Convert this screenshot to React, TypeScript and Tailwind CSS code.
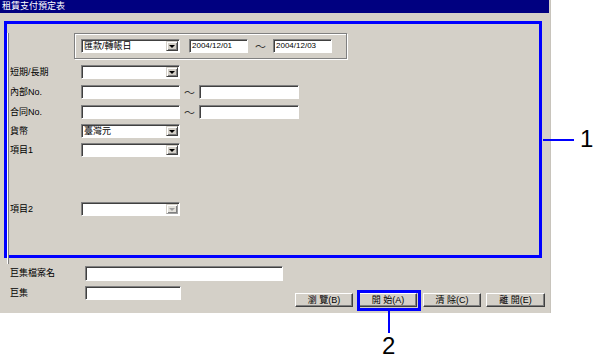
import React from 'react';

const sunken =
  'border border-t-[#808080] border-l-[#808080] border-r-white border-b-white shadow-[inset_1px_1px_0_#404040] bg-white';

const Combo: React.FC<{ className: string; text?: string; disabled?: boolean }> = ({ className, text, disabled }) => (
  <div className={`${sunken} ${className} flex h-[14px] items-stretch py-[1px] pr-[1px]`}>
    <span className="pl-[2px] text-[9px] leading-[11px]">{text}</span>
    <div
      className={`ml-auto flex w-[12px] items-center justify-center border border-t-[#d4d0c8] border-l-[#d4d0c8] shadow-[inset_1px_1px_0_#fff,inset_-1px_-1px_0_#808080] ${
        disabled ? 'bg-[#e4e2dc] border-r-[#a0a0a0] border-b-[#a0a0a0]' : 'bg-[#d4d0c8] border-r-[#404040] border-b-[#404040]'
      }`}
    >
      <span
        className={`h-0 w-0 border-x-[3px] border-t-[3px] border-x-transparent ${
          disabled ? 'border-t-[#a0a0a0]' : 'border-t-black'
        }`}
      />
    </div>
  </div>
);

const Input: React.FC<{ className: string; text?: string }> = ({ className, text }) => (
  <div className={`${sunken} ${className} flex h-[14px] items-center pl-[2px] text-[8px]`}>{text}</div>
);

const Btn: React.FC<{ label: string; className?: string; children?: React.ReactNode }> = ({ label, className = '', children }) => (
  <div
    className={`relative flex h-[14px] w-[58px] items-center justify-center border border-t-white border-l-white border-r-[#404040] border-b-[#404040] bg-[#d4d0c8] text-[9px] leading-none shadow-[inset_-1px_-1px_0_#808080] ${className}`}
  >
    {label}
    {children}
  </div>
);

const Row: React.FC<{ label: string; className: string; children: React.ReactNode }> = ({ label, className, children }) => (
  <div className={`flex items-center ${className}`}>
    <div className="w-[73px] pl-[2px] text-[9px] leading-none">{label}</div>
    {children}
  </div>
);

const Tilde: React.FC<{ className: string }> = ({ className }) => (
  <div className={`${className} text-center font-['Noto_Sans_CJK_TC',sans-serif] text-[11px] leading-none text-[#333]`}>～</div>
);

const App: React.FC = () => {
  return (
    <div className="relative h-[362px] w-[594px] overflow-hidden bg-white font-['Liberation_Sans','Noto_Sans_CJK_TC',sans-serif] text-black">
      <div className="flex h-[313px] w-[551px] flex-col bg-[#d4d0c8] border-r border-r-[#c8c4bc]">
        {/* title bar */}
        <div className="h-[13px] w-[549px] bg-[#000080] pl-[2px] text-[9px] leading-[13px] text-white">租賃支付預定表</div>

        {/* highlighted search area (1) */}
        <div className="ml-[4px] mt-[8px] h-[237px] w-[538px] border-[3px] border-[#0000ff]">
          <div className="h-full border-l border-l-white shadow-[inset_1px_0_0_#808080]">
            <div className="ml-[66px] mt-[9px] flex h-[26px] w-[273px] items-center border border-[#808080] pl-[6px] shadow-[inset_1px_1px_0_#fff,1px_1px_0_#fff]">
              <Combo className="w-[99px]" text="匯款/轉帳日" />
              <Input className="ml-[9px] w-[59px]" text="2004/12/01" />
              <Tilde className="w-[25px]" />
              <Input className="w-[59px]" text="2004/12/03" />
            </div>

            <Row label="短期/長期" className="mt-[6px]">
              <Combo className="w-[99px]" />
            </Row>
            <Row label="內部No." className="mt-[6px]">
              <Input className="w-[99px]" />
              <Tilde className="w-[19px]" />
              <Input className="w-[100px]" />
            </Row>
            <Row label="合同No." className="mt-[6px]">
              <Input className="w-[99px]" />
              <Tilde className="w-[19px]" />
              <Input className="w-[100px]" />
            </Row>
            <Row label="貨幣" className="mt-[5px]">
              <Combo className="w-[99px]" text="臺灣元" />
            </Row>
            <Row label="項目1" className="mt-[5px]">
              <Combo className="w-[99px]" />
            </Row>
            <Row label="項目2" className="mt-[45px]">
              <Combo className="w-[99px]" disabled />
            </Row>
          </div>
        </div>

        {/* macro fields */}
        <div className="mt-[8px] flex items-center">
          <div className="w-[85px] pl-[10px] text-[9px] leading-none">巨集檔案名</div>
          <Input className="h-[15px] w-[198px]" />
        </div>
        <div className="mt-[5px] flex items-start pr-[5px]">
          <div className="flex items-center">
            <div className="w-[85px] pl-[10px] text-[9px] leading-none">巨集</div>
            <Input className="w-[96px]" />
          </div>
          <div className="ml-auto mt-[7px] flex">
            <Btn label="瀏 覽(B)" />
            <Btn label="開 始(A)" className="ml-[6px]">
              <span className="absolute -bottom-[5px] -left-[3px] -right-[5px] -top-[4px] border-[3px] border-[#0000ff]" />
            </Btn>
            <Btn label="清 除(C)" className="ml-[6px]" />
            <Btn label="離 開(E)" className="ml-[5px] w-[59px]" />
          </div>
        </div>
      </div>

      {/* callouts */}
      <div className="absolute left-[543px] top-[139px] h-[2px] w-[31px] bg-[#0000ff]" />
      <div className="absolute left-[580px] top-[127px] text-[24px] leading-none">1</div>
      <div className="absolute left-[388px] top-[311px] h-[22px] w-[2px] bg-[#0000ff]" />
      <div className="absolute left-[382px] top-[334px] text-[24px] leading-none">2</div>
    </div>
  );
};

export default App;
